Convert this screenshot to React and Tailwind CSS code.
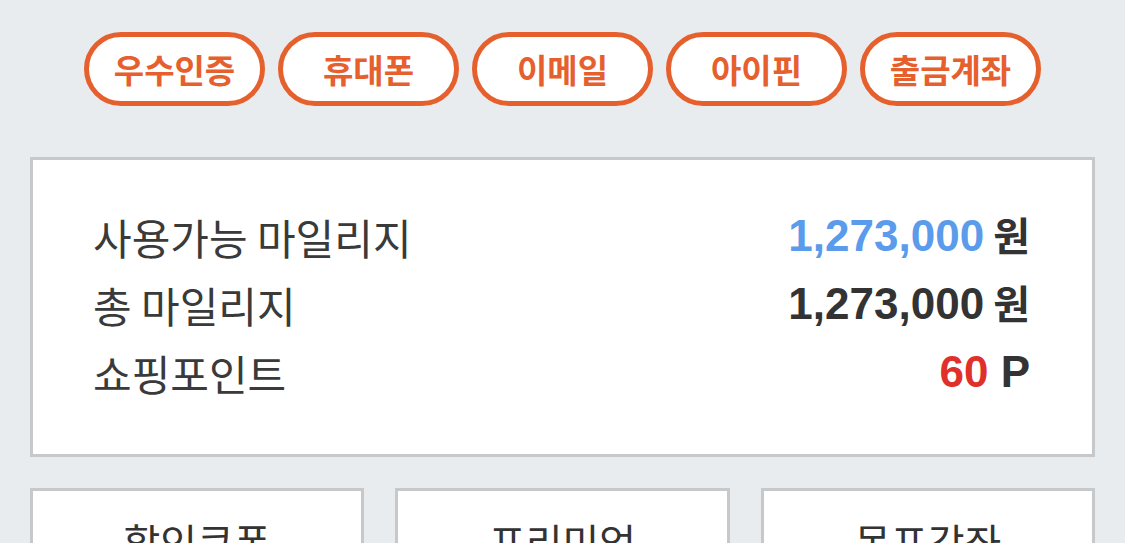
import React from 'react';

const kr = { fontFamily: '"Noto Sans CJK KR", "Noto Sans", sans-serif' };
const num = { fontFamily: '"Liberation Sans", Arial, "Noto Sans CJK KR", sans-serif' };

const tabs = ['우수인증', '휴대폰', '이메일', '아이핀', '출금계좌'];
const menus = ['할인쿠폰', '프리미엄', '목표강좌'];

const App = () => {
  return (
    <div className="w-full h-[543px] overflow-hidden bg-[#e9ecef]" style={kr}>
      <div className="flex justify-center gap-[13px] pt-[32px]">
        {tabs.map((t) => (
          <button
            key={t}
            className="w-[181px] h-[74px] rounded-full border-[5px] border-[#e6602e] bg-white text-[#e6602e] text-[33px] font-bold leading-none flex items-center justify-center"
          >
            {t}
          </button>
        ))}
      </div>

      <div className="mx-[30px] mt-[51px] h-[300px] border-[3px] border-[#c6c8ca] bg-white pl-[60px] pr-[62px] pt-[42px]">
        <div className="flex items-center justify-between h-[68px]">
          <span className="text-[42px] text-[#3a3a3a]">사용가능 마일리지</span>
          <span className="font-bold text-[#333]">
            <span className="text-[44px] text-[#5b9bec]" style={num}>1,273,000</span>
            <span className="text-[40px]"> 원</span>
          </span>
        </div>
        <div className="flex items-center justify-between h-[68px]">
          <span className="text-[42px] text-[#3a3a3a]">총 마일리지</span>
          <span className="font-bold text-[#333]">
            <span className="text-[44px]" style={num}>1,273,000</span>
            <span className="text-[40px]"> 원</span>
          </span>
        </div>
        <div className="flex items-center justify-between h-[68px]">
          <span className="text-[42px] text-[#3a3a3a]">쇼핑포인트</span>
          <span className="font-bold text-[#333] text-[44px]" style={num}>
            <span className="text-[#e0302a]">60</span> P
          </span>
        </div>
      </div>

      <div className="grid grid-cols-3 gap-[31px] px-[30px] mt-[31px]">
        {menus.map((m) => (
          <div key={m} className="h-[160px] border-[3px] border-[#c6c8ca] bg-white flex justify-center pt-[30px]">
            <span className="text-[40px] text-[#333] leading-none">{m}</span>
          </div>
        ))}
      </div>
    </div>
  );
};

export default App;
